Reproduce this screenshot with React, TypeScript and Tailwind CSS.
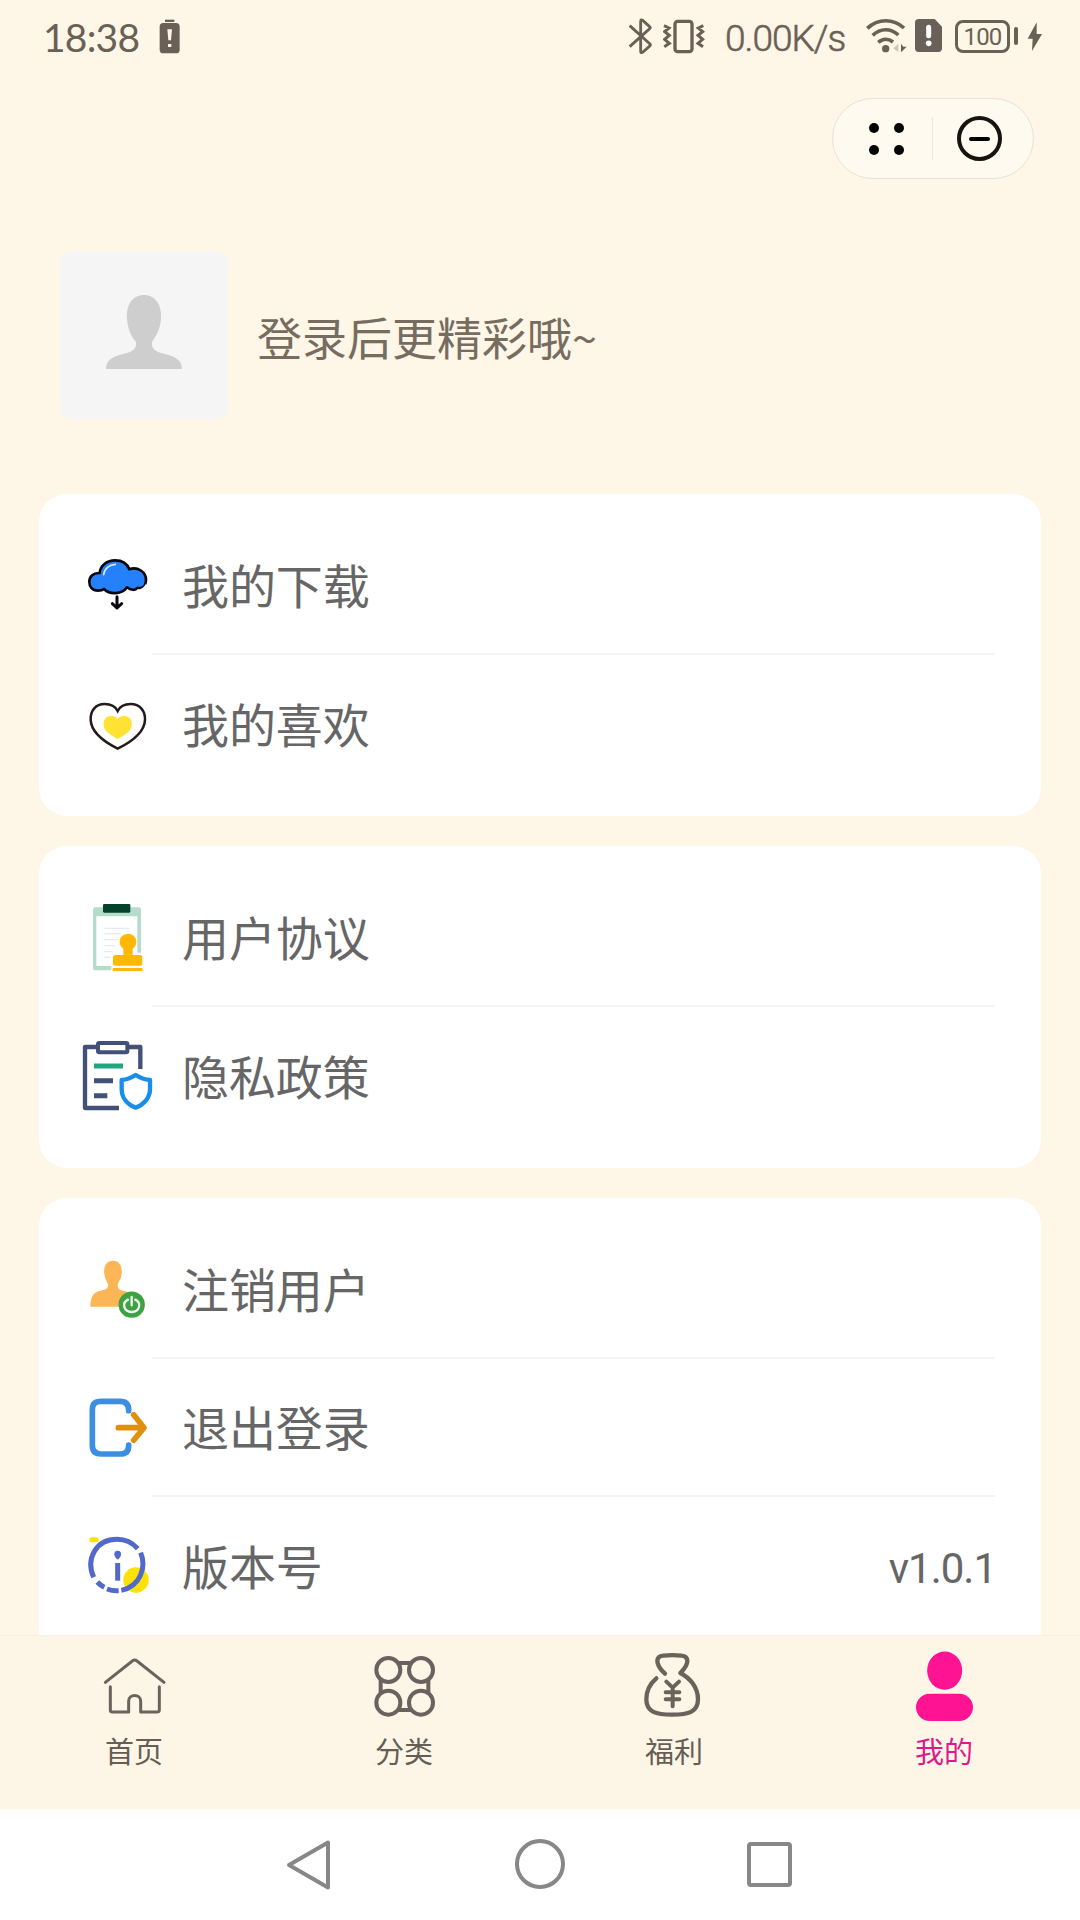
import type { ReactNode } from "react";

const CJK = "font-['Noto_Sans_CJK_SC',sans-serif]";

function Icon({ box, children }: { box: string; children: ReactNode }) {
  return (
    <svg viewBox={box} className="size-[72px] shrink-0" fill="none">
      {children}
    </svg>
  );
}

function DownloadIcon() {
  return (
    <Icon box="153 207 216 216">
      <path
        d="M204 332C187 332 178 320 178 306C178 289 190 278 209 279C211 256 232 241 255 241C277 241 292 252 298 268C323 259 348 276 348 299C348 312 341 322 333 324L321 324C317 332 302 331 291 322C276 344 239 345 222 327C217 331 211 332 204 332Z"
        fill="#2580fb"
        stroke="#07080f"
        strokeWidth="8"
        strokeLinejoin="round"
      />
      <path d="M221 284C223 266 238 254 256 253" stroke="#d7eaff" strokeWidth="5" strokeLinecap="round" />
      <path d="M324 328C335 328 343 321 348 311V330Z" fill="#fff" />
      <path d="M261 350V384M247 371L261 384L275 371" stroke="#07080f" strokeWidth="9" strokeLinecap="round" strokeLinejoin="round" />
    </Icon>
  );
}

function HeartIcon() {
  return (
    <Icon box="153 621 216 216">
      <path
        d="M263 693C257 681 243 672 224 672C196 672 181 693 182 719C183 758 223 786 263 806C303 786 344 758 345 719C346 693 330 672 302 672C283 672 269 681 263 693Z"
        stroke="#231a1a"
        strokeWidth="7.500"
      />
      <path
        d="M263 717C258 708 249 707 241 708C226 710 219 722 221 737C223 755 245 766 263 777C281 766 303 755 305 737C307 722 300 710 285 708C277 707 268 708 263 717Z"
        fill="#ffe232"
      />
    </Icon>
  );
}

function AgreementIcon() {
  return (
    <Icon box="63 93 216 216">
      <path d="M106 112H236Q243 112 243 120V248H232V139H109V288H154V301H106Q99 301 99 294V120Q99 112 106 112Z" fill="#b4dccb" />
      <path d="M133 175H209M133 191H182M133 209H176M133 227H166M133 245H158M133 262H152" stroke="#e6e9f1" strokeWidth="4" />
      <rect x="129" y="102" width="82" height="26" rx="4" fill="#04432a" />
      <path
        d="M204 191C220 191 229 202 229 215C229 226 223 231 218 237V255H239Q247 255 247 263V281Q247 287 240 287H166Q159 287 159 281V263Q159 255 167 255H190V237C185 231 179 226 179 215C179 202 188 191 204 191Z"
        fill="#ffb806"
      />
      <rect x="158" y="294" width="90" height="9" rx="3" fill="#ffb806" />
    </Icon>
  );
}

function PrivacyIcon() {
  return (
    <Icon box="63 507 216 216">
      <path d="M115 531H75V714H177M203 531H241V597" stroke="#435078" strokeWidth="13" strokeLinejoin="round" />
      <rect x="114" y="519" width="88" height="28" rx="4" stroke="#435078" strokeWidth="12" />
      <path d="M102 588H189" stroke="#20a67e" strokeWidth="15" />
      <path d="M102 632H159M102 677H142" stroke="#435078" strokeWidth="15" />
      <path
        d="M227 615C213 624 199 629 185 630V657C185 684 203 704 227 713C251 704 270 684 270 657V630C256 629 241 624 227 615Z"
        stroke="#168eea"
        strokeWidth="13"
        strokeLinejoin="round"
      />
    </Icon>
  );
}

function CancelUserIcon() {
  return (
    <Icon box="63 69 216 216">
      <path
        d="M159 92C179 92 188 111 185 133C183 147 176 155 173 164C172 181 187 181 203 186C218 191 225 205 225 230H91C92 204 97 190 115 184C130 180 144 179 145 164C140 154 135 146 133 133C130 111 138 92 159 92Z"
        fill="#fdb655"
      />
      <circle cx="215" cy="224" r="39.500" fill="#3da242" />
      <path d="M204 209C184 219 191 245 215 246C239 245 246 219 226 209M215 201V226" stroke="#f3fff3" strokeWidth="7" strokeLinecap="round" />
    </Icon>
  );
}

function LogoutIcon() {
  return (
    <Icon box="63 483 216 216">
      <path
        d="M206 542V540C206 521 196 514 180 514H123C105 514 97 522 97 539V646C97 663 106 672 123 672H180C197 672 206 664 206 647V645"
        stroke="#3d8ee3"
        strokeWidth="17"
        strokeLinecap="round"
        strokeLinejoin="round"
      />
      <path d="M175 593H249M221 554L252 593L221 631" stroke="#df910d" strokeWidth="17" strokeLinecap="round" strokeLinejoin="round" />
    </Icon>
  );
}

function VersionIcon() {
  return (
    <Icon box="63 147 216 216">
      <circle cx="228" cy="300" r="38" fill="#fbe204" />
      <rect x="88" y="172" width="28" height="15" rx="7" fill="#fbe204" />
      <g stroke="#5268cb" strokeWidth="15">
        <path d="M101 292C76 235 109 178 171 178C197 178 218 189 233 206" />
        <path d="M242 218C260 262 241 319 184 331" />
        <path d="M112 306Q121 316 133 322M141 327Q157 333 176 332" />
        <path d="M173 249V302" />
      </g>
      <path d="M173 212C181 212 184 218 183 225C182 231 177 234 176 238H170C169 234 164 231 163 225C162 218 165 212 173 212Z" fill="#5268cb" />
    </Icon>
  );
}

function HomeIcon() {
  return (
    <Icon box="117 60 216 216">
      <path
        d="M136 157L217 93Q224 87 231 93L312 157M151 170V239Q151 246 158 246H206V213C206 191 242 191 242 213V246H290Q298 246 298 239V170"
        stroke="#6b625b"
        strokeWidth="9"
        strokeLinecap="round"
        strokeLinejoin="round"
      />
    </Icon>
  );
}

function CategoryIcon() {
  return (
    <Icon box="927 60 216 216">
      <g stroke="#6b625f" strokeWidth="12">
        <path d="M1015 99H1053M1015 240H1053M962 150V188M1105 150V188" />
        <circle cx="985" cy="120" r="36" />
        <circle cx="1083" cy="120" r="36" />
        <circle cx="985" cy="218" r="36" />
        <circle cx="1083" cy="218" r="36" />
      </g>
    </Icon>
  );
}

function BenefitIcon() {
  return (
    <Icon box="117 60 216 216">
      <g stroke="#6b625b" strokeWidth="13" strokeLinecap="round" strokeLinejoin="round">
        <path d="M195 131C184 121 172 107 172 93C172 82 179 78 190 77Q217 74 244 77C255 78 262 82 262 93C262 107 251 119 241 129C270 144 294 172 294 208C294 247 264 254 217 254C169 254 139 247 139 208C139 183 150 161 169 145" />
        <path d="M199 155L218 173L237 155M197 187H238M197 208H238M218 176V229" strokeWidth="12" />
      </g>
    </Icon>
  );
}

function MineIcon() {
  return (
    <Icon box="927 60 216 216">
      <ellipse cx="1034" cy="122" rx="52.500" ry="57.500" fill="#fe1493" />
      <rect x="948" y="191" width="171" height="82" rx="41" fill="#fe1493" />
    </Icon>
  );
}

function StatusBar() {
  return (
    <header className="flex h-[72px] items-start pt-[18px] pl-[43px] text-[#6a6055]">
      <span className="h-9 w-[113px] font-['Lato'] text-[39px] leading-[39px] tracking-[-0.8px]">18:38</span>
      <svg viewBox="474 54 72 108" className="ml-0.5 h-9 w-6" fill="none">
        <rect x="495" y="59" width="28" height="7" fill="#6a6055" />
        <rect x="479" y="69" width="60" height="91" rx="11" fill="#6a6055" />
        <path d="M502 88H516L513 121H505ZM504 132H514V141H504Z" fill="#fff6e8" />
      </svg>
      <svg viewBox="84 54 72 108" className="ml-[446px] h-9 w-6" fill="none">
        <path
          d="M89 77L150 132Q153 135 148 139L129 156Q122 162 122 153V65Q122 56 129 62L148 79Q153 83 149 86L89 140"
          stroke="#6a6055"
          strokeWidth="8.500"
        />
      </svg>
      <svg viewBox="189 54 126 108" className="ml-[11px] h-9 w-[42px]" fill="none" stroke="#6a6055">
        <rect x="225" y="64" width="51" height="91" rx="8" strokeWidth="10" />
        <path d="M192 77L207 84L194 95L208 106L194 118L208 130L193 140M310 77L295 84L308 95L294 106L308 118L294 130L309 140" strokeWidth="9" />
      </svg>
      <span className="ml-[20px] h-9 w-[126px] whitespace-nowrap font-['Roboto'] text-[37px] font-light leading-[42px] tracking-[-1px] [-webkit-text-stroke:0.6px_#6a6055]">
        0.00K/s
      </span>
      <svg viewBox="798 54 126 108" className="ml-[15px] h-9 w-[42px]" fill="none">
        <path d="M802 85C834 55 880 55 912 84M818 106C842 84 872 84 895 105M835 127C848 115 865 115 879 126" stroke="#6a6055" strokeWidth="11" />
        <circle cx="857" cy="146" r="11" fill="#6a6055" />
        <path d="M895 131V156L880 145Z" fill="#cfc6b8" />
        <path d="M903 131V157L920 140H910Z" fill="#6a6055" />
      </svg>
      <svg viewBox="942 54 87 108" className="ml-1.5 h-9 w-[29px]" fill="none">
        <path d="M956 57H1004L1026 80V145Q1026 156 1015 156H956Q945 156 945 145V68Q945 57 956 57Z" fill="#6a605a" />
        <path d="M986 82V107" stroke="#fff" strokeWidth="15" strokeLinecap="round" />
        <circle cx="986" cy="130" r="8.500" fill="#fff" />
      </svg>
      <div className="mt-0.5 ml-3 flex h-[33px] w-[55px] items-center justify-center rounded-[8px] border-[3px] border-[#6a6055] font-['Roboto'] text-[24px] leading-none tracking-[-0.8px]">
        100
      </div>
      <div className="mt-[9px] ml-1 h-[18px] w-1 rounded-sm bg-[#6a6055]" />
      <svg viewBox="1281 54 48 108" className="ml-[9px] h-9 w-4">
        <path d="M1310 67L1283 116H1298L1296 153L1326 102H1310Z" fill="#6a6055" />
      </svg>
    </header>
  );
}

function Capsule() {
  return (
    <div className="mt-[26px] mr-[46px] flex h-[81px] w-[202px] items-center self-end rounded-full border border-[#e9e1d5] bg-[#fefaf0]">
      <div className="ml-[36px] grid w-[35px] grid-cols-2 gap-x-[15px] gap-y-3">
        <i className="size-2.5 rounded-full bg-black" />
        <i className="size-2.5 rounded-full bg-black" />
        <i className="size-2.5 rounded-full bg-black" />
        <i className="size-2.5 rounded-full bg-black" />
      </div>
      <div className="ml-[28px] h-[43px] w-px bg-[#ece6dc]" />
      <div className="ml-6 flex size-[45px] items-center justify-center rounded-full border-[4px] border-[#17130f]">
        <i className="h-1 w-[21px] rounded-full bg-black" />
      </div>
    </div>
  );
}

function Profile() {
  return (
    <section className="mt-[72px] ml-[60px] flex h-[168px] items-center">
      <div className="flex size-[168px] justify-center rounded-[12px] bg-[#f5f5f5]">
        <svg viewBox="0 0 78 76" className="mt-[43px] h-[76px] w-[78px]">
          <path
            d="M39 1C50 1 57 10 56 25C55 37 50 43 47 48C46 56 52 58 60 60C72 63 77 67 77 75H1C1 67 6 63 18 60C26 58 32 56 31 48C27 43 23 37 22 25C21 10 28 1 39 1Z"
            fill="#cecece"
          />
        </svg>
      </div>
      <span className={`${CJK} mt-[3px] ml-[29px] text-[45px] leading-[60px] text-[#766d60]`}>登录后更精彩哦~</span>
    </section>
  );
}

type RowProps = { icon: ReactNode; label: string; value?: string; last?: boolean };

function Row({ icon, label, value, last }: RowProps) {
  return (
    <div className="flex h-[138px] items-center pr-[46px] pl-[42px]">
      {icon}
      <div
        className={
          last
            ? "-ml-px flex h-full flex-1 items-center justify-between pl-[30px]"
            : "-ml-px flex h-[140px] flex-1 items-center justify-between border-b-2 border-[#f3f3f3] pl-[30px]"
        }
      >
        <span className={`${CJK} text-[47px] leading-[60px] tracking-[-0.1px] text-[#666]`}>{label}</span>
        {value && (
          <span className="-mr-px mt-[7px] font-['Roboto'] text-[42px] leading-[60px] tracking-[-1px] text-[#666]">{value}</span>
        )}
      </div>
    </div>
  );
}

function Card({ children }: { children: ReactNode }) {
  return <section className="h-[322px] shrink-0 rounded-[28px] bg-white pt-[22px]">{children}</section>;
}

function Tab({ icon, label, active }: { icon: ReactNode; label: string; active?: boolean }) {
  return (
    <button className="flex flex-1 flex-col items-center pt-3.5">
      {icon}
      <span
        className={
          active
            ? `${CJK} mt-2 mr-0.5 text-[29px] leading-[40px] text-[#e0198a]`
            : `${CJK} mt-2 mr-0.5 text-[29px] leading-[40px] text-[#665e55]`
        }
      >
        {label}
      </span>
    </button>
  );
}

export default function App() {
  return (
    <div className="flex h-[1920px] w-[1080px] flex-col overflow-hidden bg-[#fef6e7]">
      <StatusBar />
      <Capsule />
      <Profile />
      <main className="mx-[39px] mt-[75px] flex h-[1141px] shrink-0 flex-col gap-[30px] overflow-hidden">
        <Card>
          <Row icon={<DownloadIcon />} label="我的下载" />
          <Row icon={<HeartIcon />} label="我的喜欢" last />
        </Card>
        <Card>
          <Row icon={<AgreementIcon />} label="用户协议" />
          <Row icon={<PrivacyIcon />} label="隐私政策" last />
        </Card>
        <section className="h-[460px] shrink-0 rounded-[28px] bg-white pt-[22px]">
          <Row icon={<CancelUserIcon />} label="注销用户" />
          <Row icon={<LogoutIcon />} label="退出登录" />
          <Row icon={<VersionIcon />} label="版本号" value="v1.0.1" last />
        </section>
      </main>
      <nav className="flex h-[174px] shrink-0 border-t border-[#f8f0e3] bg-[#fdf6e7]">
        <Tab icon={<HomeIcon />} label="首页" />
        <Tab icon={<CategoryIcon />} label="分类" />
        <Tab icon={<BenefitIcon />} label="福利" />
        <Tab icon={<MineIcon />} label="我的" active />
      </nav>
      <footer className="flex h-[111px] shrink-0 items-center justify-between bg-white px-[285px]">
        <svg viewBox="0 0 48 54" className="h-[54px] w-12" fill="none">
          <path d="M43 4.500V49.500L4 27Z" stroke="#878787" strokeWidth="4" strokeLinejoin="round" />
        </svg>
        <svg viewBox="0 0 54 54" className="h-[54px] w-[54px]" fill="none">
          <circle cx="27" cy="26" r="23" stroke="#878787" strokeWidth="4" />
        </svg>
        <svg viewBox="0 0 48 54" className="h-[54px] w-12" fill="none">
          <rect x="2" y="6" width="41" height="41" rx="2" stroke="#878787" strokeWidth="4" />
        </svg>
      </footer>
    </div>
  );
}
